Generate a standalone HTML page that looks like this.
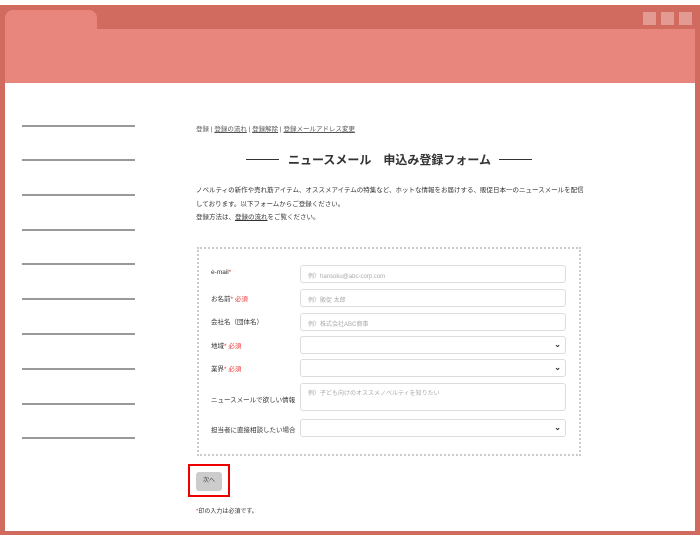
<!DOCTYPE html>
<html><head><meta charset="utf-8"><style>
*{margin:0;padding:0;box-sizing:border-box}
body{width:700px;height:550px;background:#fff;position:relative;overflow:hidden;font-family:"Liberation Sans","Noto Sans CJK JP",sans-serif;color:#333}
.frame{position:absolute;left:0;top:5px;width:700px;height:530px;background:#d16b60}
.tab{position:absolute;left:5px;top:10px;width:92px;height:25px;background:#e8867e;border-radius:8px 8px 0 0}
.head{position:absolute;left:5px;top:29px;width:690px;height:54px;background:#e8867e}
.sq{position:absolute;top:12px;width:13px;height:13px;background:#e39a93}
.content{position:absolute;left:5px;top:83px;width:690px;height:448px;background:#fff}
.line{position:absolute;left:22px;width:113px;height:2px;background:#999}
.t{position:absolute;font-size:6.5px;white-space:nowrap}
u{text-decoration:underline}
.form{position:absolute;left:197px;top:247px;width:384px;height:209px;border:2px dotted #ccc}
.lab{position:absolute;left:211px;font-size:6.5px;color:#333}
.r{color:#e33}
.in{position:absolute;left:300px;width:266px;height:18px;border:1px solid #ddd;border-radius:3px;background:#fff;font-size:6px;color:#aaa;padding:5px 0 0 7px}
.ar{position:absolute;right:4px;top:3px;font-size:8px;font-weight:bold;color:#333}
.dash{position:absolute;top:159px;width:33px;height:1px;background:#333}
</style></head><body>
<div class="frame"></div>
<div class="tab"></div>
<div class="head"></div>
<div class="sq" style="left:643px"></div><div class="sq" style="left:661px"></div><div class="sq" style="left:679px"></div>
<div class="content"></div>
<div class="line" style="top:125px"></div><div class="line" style="top:159px"></div><div class="line" style="top:194px"></div><div class="line" style="top:229px"></div><div class="line" style="top:263px"></div><div class="line" style="top:298px"></div><div class="line" style="top:333px"></div><div class="line" style="top:368px"></div><div class="line" style="top:403px"></div><div class="line" style="top:437px"></div>
<div class="t" style="left:196px;top:123px;color:#555">登録 | <u>登録の流れ</u> | <u>登録解除</u> | <u>登録メールアドレス変更</u></div>
<div class="dash" style="left:246px"></div><div class="dash" style="left:499px"></div>
<div class="t" style="left:288px;top:151px;font-size:12px;font-weight:bold;color:#333">ニュースメール　申込み登録フォーム</div>
<div class="t" style="left:196px;top:184px;line-height:13.5px">ノベルティの新作や売れ筋アイテム、オススメアイテムの特集など、ホットな情報をお届けする、販促日本一のニュースメールを配信<br>しております。以下フォームからご登録ください。<br>登録方法は、<u>登録の流れ</u>をご覧ください。</div>
<div class="form"></div>
<div class="lab" style="top:269px">e-mail<span class="r">*</span></div>
<div class="lab" style="top:293px">お名前<span class="r">* 必須</span></div>
<div class="lab" style="top:316px">会社名（団体名）</div>
<div class="lab" style="top:340px">地域<span class="r">* 必須</span></div>
<div class="lab" style="top:363px">業界<span class="r">* 必須</span></div>
<div class="lab" style="top:394px">ニュースメールで欲しい情報</div>
<div class="lab" style="top:424px">担当者に直接相談したい場合</div>
<div class="in" style="top:265px">例）hansoku@abc-corp.com</div>
<div class="in" style="top:289px">例）販促 太郎</div>
<div class="in" style="top:313px">例）株式会社ABC商事</div>
<div class="in" style="top:336px"><span class="ar">⌄</span></div>
<div class="in" style="top:359px"><span class="ar">⌄</span></div>
<div class="in" style="top:383px;height:28px;padding-top:4px">例）子ども向けのオススメノベルティを知りたい</div>
<div class="in" style="top:419px"><span class="ar">⌄</span></div>
<div style="position:absolute;left:188px;top:464px;width:42px;height:33px;border:2px solid #e00"></div>
<div style="position:absolute;left:196px;top:472px;width:26px;height:19px;background:#ccc;border-radius:3px;font-size:6px;color:#444;text-align:center;line-height:19px">次へ</div>
<div class="t" style="left:196px;top:506px;font-size:6px"><span class="r">*</span>印の入力は必須です。</div>
</body></html>
